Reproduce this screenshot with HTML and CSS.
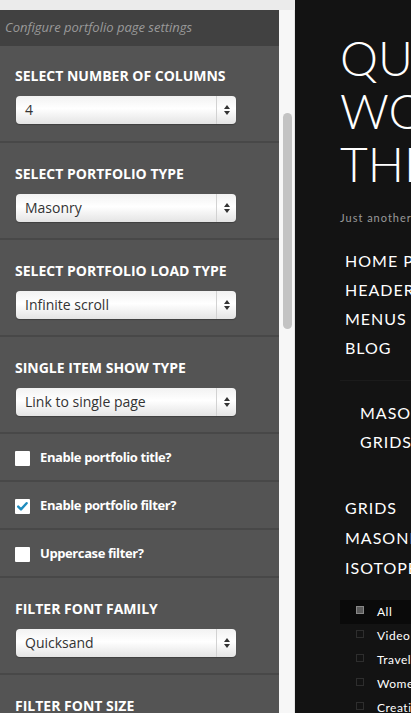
FILE: index.html
```html
<!DOCTYPE html>
<html lang="en">
<head>
  <meta charset="UTF-8">
  <meta name="viewport" content="width=device-width, initial-scale=1.0">
  <title>Portfolio page settings</title>
  <link rel="stylesheet" href="styles.css">
</head>
<body>
  <div class="page">
    <aside class="customizer">
      <div class="panel">
        <div class="panel-head">Configure portfolio page settings</div>

        <div class="option first">
          <div class="option-label">Select number of columns</div>
          <div class="select-box">
            <span class="select-value">4</span>
            <span class="select-arrows"><i class="up"></i><i class="down"></i></span>
          </div>
        </div>
        <div class="option">
          <div class="option-label">Select portfolio type</div>
          <div class="select-box">
            <span class="select-value">Masonry</span>
            <span class="select-arrows"><i class="up"></i><i class="down"></i></span>
          </div>
        </div>
        <div class="option">
          <div class="option-label">Select portfolio load type</div>
          <div class="select-box">
            <span class="select-value">Infinite scroll</span>
            <span class="select-arrows"><i class="up"></i><i class="down"></i></span>
          </div>
        </div>
        <div class="option">
          <div class="option-label">Single item show type</div>
          <div class="select-box">
            <span class="select-value">Link to single page</span>
            <span class="select-arrows"><i class="up"></i><i class="down"></i></span>
          </div>
        </div>

        <div class="check-row">
          <span class="check-box"></span>
          <span class="check-label">Enable portfolio title?</span>
        </div>
        <div class="check-row">
          <span class="check-box">
            <svg width="15" height="15" viewBox="0 0 15 15"><path d="M3.2 7.6 L6 10.4 L11.6 4.2" fill="none" stroke="#1e8cbe" stroke-width="2.4" stroke-linecap="round" stroke-linejoin="round"/></svg>
          </span>
          <span class="check-label">Enable portfolio filter?</span>
        </div>
        <div class="check-row">
          <span class="check-box"></span>
          <span class="check-label">Uppercase filter?</span>
        </div>

        <div class="option">
          <div class="option-label">Filter font family</div>
          <div class="select-box">
            <span class="select-value">Quicksand</span>
            <span class="select-arrows"><i class="up"></i><i class="down"></i></span>
          </div>
        </div>
        <div class="option">
          <div class="option-label">Filter font size</div>
        </div>
      </div>
      <div class="scroll-track"><div class="scroll-thumb"></div></div>
    </aside>

    <main class="preview">
      <h1 class="site-title">QUICKSAND<br>WORDPRESS<br>THEME</h1>
      <p class="tagline">Just another WordPress site</p>

      <ul class="menu">
        <li>Home page</li>
        <li>Headers</li>
        <li>Menus</li>
        <li>Blog</li>
      </ul>
      <ul class="menu sub">
        <li>Masonry</li>
        <li>Grids</li>
      </ul>
      <ul class="menu wide">
        <li>Grids</li>
        <li>Masonry</li>
        <li>Isotope</li>
      </ul>

      <ul class="filters">
        <li class="active"><span class="fbox"></span>All</li>
        <li><span class="fbox"></span>Video</li>
        <li><span class="fbox"></span>Travel</li>
        <li><span class="fbox"></span>Women</li>
        <li><span class="fbox"></span>Creative</li>
      </ul>
    </main>
  </div>
</body>
</html>
```

FILE: styles.css
```css
/* Customizer + preview */
html, body {
  margin: 0;
  padding: 0;
  height: 100%;
  overflow: hidden;
}
body {
  font-family: "Open Sans", Arial, sans-serif;
  background: #131313;
}
.page {
  display: flex;
  height: 713px;
}

/* left panel */
.customizer {
  width: 295px;
  flex: none;
  display: flex;
  padding-top: 10px;
  background: #ebebeb;
  box-sizing: border-box;
}
.panel {
  width: 279px;
  background: #545454;
  overflow: hidden;
}
.panel-head {
  height: 36px;
  line-height: 35px;
  padding-left: 5px;
  background: #414141;
  color: #9a9a9a;
  font-size: 13px;
  font-style: italic;
}
.option {
  padding: 21px 15px 16px;
  border-bottom: 2px solid #484848;
}
.option.first {
  padding-top: 20px;
  padding-bottom: 17px;
}
.option-label {
  color: #fff;
  font-size: 14px;
  font-weight: bold;
  line-height: 20px;
  text-transform: uppercase;
  margin-bottom: 10px;
}
.select-box {
  display: flex;
  width: 220px;
  height: 28px;
  margin-left: 1px;
  box-sizing: border-box;
  border-radius: 4px;
  background: linear-gradient(#f2f2f2, #fff 45%, #e4e4e4);
  box-shadow: 0 1px 1px rgba(0, 0, 0, 0.25);
}
.select-value {
  flex: 1;
  padding-left: 9px;
  line-height: 28px;
  font-size: 14px;
  color: #333;
}
.select-arrows {
  width: 19px;
  border-left: 1px solid #d2d2d2;
  display: flex;
  flex-direction: column;
  align-items: center;
  justify-content: center;
  gap: 2px;
}
.select-arrows i {
  width: 0;
  height: 0;
  border-left: 3px solid transparent;
  border-right: 3px solid transparent;
}
.select-arrows .up {
  border-bottom: 4px solid #333;
}
.select-arrows .down {
  border-top: 4px solid #333;
}
.check-row {
  display: flex;
  align-items: center;
  gap: 10px;
  height: 46px;
  padding-left: 15px;
  border-bottom: 2px solid #484848;
}
.check-box {
  width: 15px;
  height: 15px;
  flex: none;
  margin-top: 2px;
  background: #fff;
  border-radius: 1px;
  display: flex;
}
.check-label {
  color: #fff;
  font-size: 13px;
  font-weight: bold;
  letter-spacing: -0.4px;
}

/* scrollbar */
.scroll-track {
  width: 16px;
  background: #f7f7f7;
  border-right: 1px solid #e4e4e4;
  box-sizing: border-box;
}
.scroll-thumb {
  width: 9px;
  height: 216px;
  margin: 103px 0 0 4px;
  border-radius: 5px;
  background: #c3c3c3;
}

/* right preview */
.preview {
  flex: 1;
  overflow: hidden;
  white-space: nowrap;
  padding-left: 45px;
  color: #fff;
  font-family: Lato, "Open Sans", sans-serif;
}
.site-title {
  margin: 31px 0 0;
  font-size: 48px;
  line-height: 53px;
  font-weight: 300;
}
.tagline {
  margin: 20px 0 0;
  font-size: 11px;
  line-height: 16px;
  letter-spacing: 1px;
  color: #9a9a9a;
}
.menu {
  list-style: none;
  margin: 20px 0 0;
  padding: 0 0 0 5px;
  font-size: 16px;
  line-height: 29px;
  letter-spacing: 1px;
  text-transform: uppercase;
}
.menu.sub {
  margin-top: 18px;
  padding: 17px 0 0 20px;
  border-top: 1px solid #1b1b1b;
}
.menu.wide {
  margin-top: 37px;
  line-height: 30px;
}
.filters {
  list-style: none;
  margin: 17px 0 0;
  padding: 0;
  font-size: 12px;
  line-height: 24px;
  letter-spacing: 0.5px;
}
.filters li {
  display: flex;
  align-items: flex-start;
  padding-left: 16px;
}
.filters li.active {
  background: #0a0a0a;
}
.fbox {
  flex: none;
  width: 8px;
  height: 8px;
  margin: 6px 13px 0 0;
  border: 1px solid #2e2e2e;
  box-sizing: border-box;
}
.active .fbox {
  border-color: #888;
  background: #5a5a5a;
}
```
